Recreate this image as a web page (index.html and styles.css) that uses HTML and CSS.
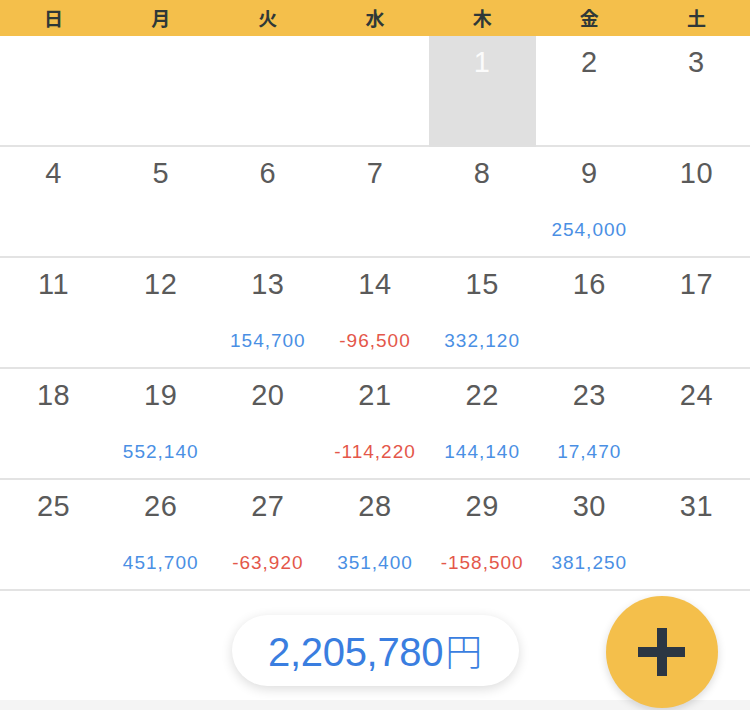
FILE: index.html
```html
<!DOCTYPE html>
<html lang="ja">
<head>
<meta charset="utf-8">
<link rel="stylesheet" href="styles.css">
</head>
<body>
<div class="app">
  <div class="weekdays">
    <div>日</div><div>月</div><div>火</div><div>水</div><div>木</div><div>金</div><div>土</div>
  </div>
  <div class="grid">
    <div class="cell"></div><div class="cell"></div><div class="cell"></div><div class="cell"></div>
    <div class="cell today"><span class="num">1</span></div>
    <div class="cell"><span class="num">2</span></div>
    <div class="cell"><span class="num">3</span></div>

    <div class="cell"><span class="num">4</span></div>
    <div class="cell"><span class="num">5</span></div>
    <div class="cell"><span class="num">6</span></div>
    <div class="cell"><span class="num">7</span></div>
    <div class="cell"><span class="num">8</span></div>
    <div class="cell"><span class="num">9</span><span class="amt plus">254,000</span></div>
    <div class="cell"><span class="num">10</span></div>

    <div class="cell"><span class="num">11</span></div>
    <div class="cell"><span class="num">12</span></div>
    <div class="cell"><span class="num">13</span><span class="amt plus">154,700</span></div>
    <div class="cell"><span class="num">14</span><span class="amt minus">-96,500</span></div>
    <div class="cell"><span class="num">15</span><span class="amt plus">332,120</span></div>
    <div class="cell"><span class="num">16</span></div>
    <div class="cell"><span class="num">17</span></div>

    <div class="cell"><span class="num">18</span></div>
    <div class="cell"><span class="num">19</span><span class="amt plus">552,140</span></div>
    <div class="cell"><span class="num">20</span></div>
    <div class="cell"><span class="num">21</span><span class="amt minus">-114,220</span></div>
    <div class="cell"><span class="num">22</span><span class="amt plus">144,140</span></div>
    <div class="cell"><span class="num">23</span><span class="amt plus">17,470</span></div>
    <div class="cell"><span class="num">24</span></div>

    <div class="cell"><span class="num">25</span></div>
    <div class="cell"><span class="num">26</span><span class="amt plus">451,700</span></div>
    <div class="cell"><span class="num">27</span><span class="amt minus">-63,920</span></div>
    <div class="cell"><span class="num">28</span><span class="amt plus">351,400</span></div>
    <div class="cell"><span class="num">29</span><span class="amt minus">-158,500</span></div>
    <div class="cell"><span class="num">30</span><span class="amt plus">381,250</span></div>
    <div class="cell"><span class="num">31</span></div>
  </div>
  <div class="footer">
    <div class="total">2,205,780<span class="yen">円</span></div>
  </div>
  <div class="bottombar"></div>
  <button class="fab" aria-label="追加">
    <svg width="48" height="48" viewBox="0 0 48 48"><rect x="0" y="19" width="47" height="10" fill="#2b3643"/><rect x="19" y="0" width="10" height="48" fill="#2b3643"/></svg>
  </button>
</div>
</body>
</html>
```

FILE: styles.css
```css
* { box-sizing: border-box; }
html, body { margin: 0; padding: 0; background: #fff; }
body { font-family: "Liberation Sans", "Noto Sans CJK JP", sans-serif; }
.app { position: relative; width: 750px; height: 710px; overflow: hidden; }
.weekdays {
  height: 36px;
  background: #f4bf4b;
  display: grid;
  grid-template-columns: repeat(7, 1fr);
  align-items: center;
  text-align: center;
  font-family: "Noto Sans CJK JP", sans-serif;
  font-weight: 700;
  font-size: 19px;
  color: #2f3838;
  line-height: 36px;
}
.grid {
  display: grid;
  grid-template-columns: repeat(7, 1fr);
  grid-auto-rows: 111px;
}
.cell {
  border-bottom: 2px solid #e3e3e3;
  display: flex;
  flex-direction: column;
  align-items: center;
  padding-top: 9px;
}
.today { background: #e0e0e0; border-bottom-color: #e0e0e0; }
.today .num { color: #fbfbfb; }
.num {
  font-size: 29px;
  line-height: 34px;
  color: #5a5a5a;
  letter-spacing: 0.5px;
}
.amt {
  margin-top: 28px;
  font-size: 19px;
  line-height: 24px;
  letter-spacing: 1px;
}
.plus { color: #4a8fe4; }
.minus { color: #e4574a; }
.footer {
  height: 109px;
  display: flex;
  justify-content: center;
  align-items: flex-start;
  padding-top: 24px;
}
.total {
  width: 287px;
  height: 71px;
  border-radius: 36px;
  background: #fff;
  box-shadow: 0 3px 12px rgba(0,0,0,0.14);
  color: #3a7ee0;
  font-size: 40px;
  line-height: 71px;
  text-align: center;
  letter-spacing: -0.3px;
}
.yen { font-family: "Noto Sans CJK JP", sans-serif; font-weight: 300; font-size: 37px; margin-left: 2px; }
.bottombar { height: 10px; background: #f4f4f4; }
.fab {
  position: absolute;
  left: 606px;
  top: 596px;
  width: 112px;
  height: 112px;
  border-radius: 50%;
  border: none;
  background: #f4bf4b;
  box-shadow: 0 3px 8px rgba(0,0,0,0.15);
  display: flex;
  align-items: center;
  justify-content: center;
  padding: 0;
}
```
